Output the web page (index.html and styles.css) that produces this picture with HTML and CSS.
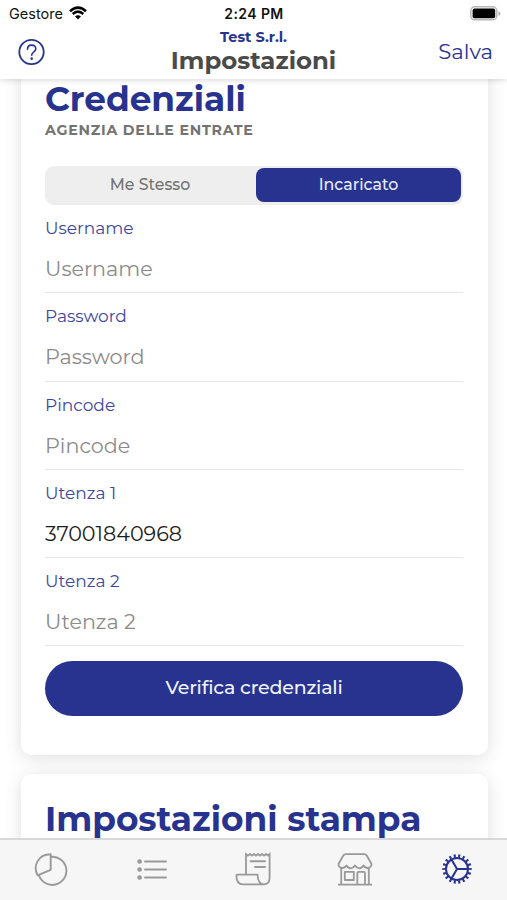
FILE: index.html
```html
<!DOCTYPE html>
<html lang="it">
<head>
<meta charset="utf-8">
<title>Impostazioni</title>
<link rel="stylesheet" href="styles.css">
</head>
<body>
<header class="header">
  <div class="status">
    <div class="carrier"><span>Gestore</span>
      <svg width="18" height="14" viewBox="0 0 18 14"><path d="M1 5.2Q9-2 17 5.2M3.7 8Q9 3.3 14.3 8" fill="none" stroke="#000" stroke-width="2.5"/><path d="M6 10.3Q9 8 12 10.3L9 13.4Z"/></svg>
    </div>
    <div class="time">2:24 PM</div>
    <svg class="battery" width="31" height="15" viewBox="0 0 31 15"><rect x=".8" y=".8" width="26" height="13" rx="4" fill="#fff" stroke="#b8b8b8" stroke-width="1.5"/><rect x="2.6" y="2.6" width="22.6" height="9.6" rx="1.8"/><path d="M28.5 5v5Q30.5 9 30.5 7.5T28.5 5" fill="#b0b0b0"/></svg>
  </div>
  <div class="nav">
    <svg class="help" width="28" height="28" viewBox="0 0 28 28" fill="none" stroke="#27338f"><circle cx="13.5" cy="14" r="12.2" stroke-width="1.8"/><path d="M9.5 11.2C9.5 5.8 17.8 5.8 17.8 10.8C17.8 14 13.7 13.7 13.7 17.2" stroke-width="1.6" stroke-linecap="round"/><circle cx="13.7" cy="20.6" r="1.3" fill="#27338f" stroke="none"/></svg>
    <div class="titles"><div class="company">Test S.r.l.</div><h1 class="title">Impostazioni</h1></div>
    <div class="save">Salva</div>
  </div>
</header>
<main class="content">
  <section class="card card-main">
    <h2 class="heading">Credenziali</h2>
    <div class="agency">AGENZIA DELLE ENTRATE</div>
    <div class="segments"><div class="segment">Me Stesso</div><div class="segment active">Incaricato</div></div>
    <div class="field"><div class="label">Username</div><div class="value">Username</div></div>
    <div class="field"><div class="label">Password</div><div class="value">Password</div></div>
    <div class="field"><div class="label">Pincode</div><div class="value">Pincode</div></div>
    <div class="field"><div class="label">Utenza 1</div><div class="value filled">37001840968</div></div>
    <div class="field"><div class="label">Utenza 2</div><div class="value">Utenza 2</div></div>
    <div class="verify">Verifica credenziali</div>
  </section>
  <section class="card card-print"><h2 class="heading">Impostazioni stampa</h2></section>
</main>
<nav class="tabs">
  <div class="tab"><svg width="36" height="36" viewBox="0 0 36 36"><path d="M17.7 2.3V17.8L4.6 23.3C-.6 13.5 5.5 2.3 17.7 2.3ZM17.7 4.8A14.1 14.1 0 1 1 5.8 22.8" stroke-width="1.9" stroke-linejoin="round"/></svg></div>
  <div class="tab"><svg width="36" height="36" viewBox="0 0 36 36"><path d="M11 9.5H32M11 17.5H32M11 25.5H32" stroke-width="2" stroke-linecap="round"/><g fill="#999" stroke="none"><circle cx="5.6" cy="9.5" r="2.3"/><circle cx="5.6" cy="17.5" r="2.3"/><circle cx="5.6" cy="25.5" r="2.3"/></g></svg></div>
  <div class="tab"><svg width="36" height="36" viewBox="0 0 36 36"><path d="M11 22.5V2L13 3.6L15 2L17 3.6L19 2L21 3.6L23 2L25 3.6L27 2L29 3.6L31 2L33 3.6L34.6 2V26Q34.6 32.3 29 32.3H8Q1.4 32.3 1.4 23.5Q1.4 22.7 2.2 22.7H22.5Q23 32.3 29 32.3" stroke-width="1.8"/><path d="M15.5 9.2H30M20 15H30" stroke-width="1.9" stroke-linecap="round"/></svg></div>
  <div class="tab"><svg width="36" height="36" viewBox="0 0 36 36" stroke-width="1.8" stroke-linejoin="round"><path d="M6 4Q7 2.2 9 2.2H27Q29 2.2 30 4L34.5 12Q34.5 15.5 31 16Q28 16 26.5 13.5Q24.8 16.3 22.2 16.3Q19.8 16.3 18 13.5Q16.2 16.3 13.8 16.3Q11.2 16.3 9.5 13.5Q8 16 5 16Q1.5 15.5 1.5 12ZM4.2 16V32.3M31.8 16V32.3M1 32.7H35M7.8 19.8H16.8V28H7.8ZM20.3 32.5V21.3Q20.3 19.8 21.8 19.8H26.5Q28 19.8 28 21.3V32.5"/></svg></div>
  <div class="tab"><svg class="gear" width="32" height="32" viewBox="0 0 32 32"><circle cx="16" cy="16" r="13.1" pathLength="180" stroke-width="3.2" stroke-dasharray="4.5 5.5" stroke-dashoffset="2.25"/><circle cx="16" cy="16" r="11" stroke-width="2"/><path d="M16 16H27M16 16L10.5 6.5M16 16L10.5 25.5" stroke-width="2"/></svg></div>
</nav>
</body>
</html>
```
FILE: styles.css
```css
* { box-sizing: border-box; }
body { margin: 0; width: 507px; height: 900px; display: flex; flex-direction: column; overflow: hidden; background: #fff; color: #222; font-family: Montserrat, Inter, sans-serif; }
h1, h2 { margin: 0; }
svg { display: block; flex: none; }
.header { height: 79px; flex: none; background: #fff; box-shadow: 0 1px 6px rgba(0,0,0,.16); z-index: 1; }
.status { height: 27px; display: grid; grid-template-columns: 1fr auto 1fr; align-items: center; padding: 0 6px 0 7px; font: 14.5px/27px Inter, sans-serif; color: #111; }
.carrier { display: flex; gap: 6px; align-items: center; padding-left: 2px; }
.carrier svg { margin-top: -2px; }
.time { font-weight: 600; font-size: 14px; letter-spacing: .4px; }
.battery { justify-self: end; margin-top: -1px; }
.nav { height: 52px; display: grid; grid-template-columns: 1fr auto 1fr; padding: 0 14px 0 18px; }
.help { margin-top: 11px; }
.titles { text-align: center; margin-left: -4px; }
.company { font-size: 14.5px; line-height: 21px; font-weight: 700; color: #27338f; }
.title { font-size: 24.4px; line-height: 25px; font-weight: 700; color: #4a4a4a; }
.save { justify-self: end; font-size: 21.2px; line-height: 48px; color: #27338f; }
.content { flex: 1; min-height: 0; overflow: hidden; }
.card { margin: 0 19px 0 21px; padding: 0 25px 0 24px; border-radius: 10px; background: #fff; box-shadow: 0 3px 18px rgba(0,0,0,.13); }
.card-main { height: 706px; margin-top: -30px; padding-top: 31px; }
.heading { font-size: 34.3px; line-height: 38px; font-weight: 700; color: #27338f; }
.agency { margin-top: 1px; font-size: 14.2px; line-height: 22px; font-weight: 700; letter-spacing: .77px; color: #737373; }
.segments { height: 39px; margin-top: 25px; padding: 2px; display: flex; border-radius: 9px; background: #eee; }
.segment { flex: 1; padding-right: 3px; line-height: 33px; font-size: 15.8px; font-weight: 500; text-align: center; color: #737373; border-radius: 8px; }
.active { flex: none; width: 205px; height: 34px; padding-right: 0; color: #e6ebff; background: #27338f; }
.field { height: 88.3px; border-bottom: 1px solid #e5e5e5; }
.label { height: 47px; line-height: 47px; font-size: 17px; color: #3c479d; }
.value { height: 34px; line-height: 34px; font-size: 20.7px; color: #8b8b8b; }
.filled { color: #1c1c1c; }
.verify { height: 55px; margin-top: 14.5px; border-radius: 28px; background: #27338f; color: #f1f3ff; text-align: center; font-size: 19px; letter-spacing: -.2px; line-height: 54px; font-weight: 500; }
.card-print { height: 160px; margin-top: 19px; padding-top: 26px; }
.tabs { height: 62px; flex: none; display: grid; grid-template-columns: repeat(5, 1fr); border-top: 2px solid #d8d8d8; background: #f6f6f6; z-index: 1; }
.tab { display: flex; justify-content: center; padding-top: 12px; }
.tab svg { fill: none; stroke: #999; }
.tab .gear { stroke: #27338f; margin: 1px 0 0 1px; }
```
